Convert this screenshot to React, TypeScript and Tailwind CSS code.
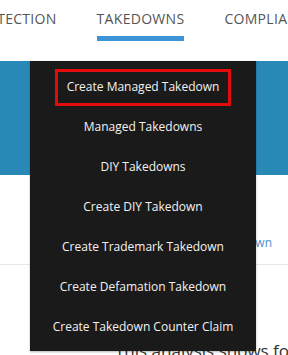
import React from "react";

const items = [
  "Create Managed Takedown",
  "Managed Takedowns",
  "DIY Takedowns",
  "Create DIY Takedown",
  "Create Trademark Takedown",
  "Create Defamation Takedown",
  "Create Takedown Counter Claim",
];

export default function App() {
  return (
    <div
      className="relative w-[288px] h-[355px] overflow-hidden bg-white"
      style={{ fontFamily: '"Open Sans", "Noto Sans", sans-serif' }}
    >
      {/* tabs */}
      <div className="h-[61px] grid grid-cols-[minmax(0,1fr)_auto_minmax(0,1fr)] gap-x-[40px] pr-[7px] pt-[8px] whitespace-nowrap text-[14px] text-[#555555] tracking-[0.3px]">
        <div className="justify-self-end leading-[22px]">PROTECTION</div>
        <div className="flex flex-col items-stretch">
          <span className="leading-[22px]">TAKEDOWNS</span>
          <span className="mt-[6px] h-[5px] bg-[#3c93d6]" />
        </div>
        <div className="justify-self-start leading-[22px]">COMPLIANCE</div>
      </div>
      {/* blue band */}
      <div className="h-[114px] bg-[#2889b7]" />
      {/* content */}
      <div className="h-[60px]" />
      <div className="flex justify-end pr-[16px] text-[12px] leading-[16px] text-[#4a90c8]">
        Managed Takedown
      </div>
      <div className="mt-[13px] h-[1px] bg-[#e6e6e6]" />
      <div className="mt-[74px] pl-[115px] whitespace-nowrap text-[17px] leading-[24px] text-[#333]">
        This analysis shows for
      </div>

      {/* dropdown menu */}
      <div className="absolute left-[30px] top-[61px] w-[226px] h-[290px] bg-[#1b1a1a] pt-[6px] shadow-[0_1px_2px_rgba(0,0,0,0.3)]">
        {items.map((t, i) => (
          <div key={t} className="h-[40px] flex items-center justify-center">
            {i === 0 ? (
              <div className="w-[176px] h-[37px] border-[3px] border-[#e30b0b] flex items-center justify-center text-[12px] text-[#f2f2f2] whitespace-nowrap">
                {t}
              </div>
            ) : (
              <span className="text-[12px] text-[#f2f2f2] whitespace-nowrap">{t}</span>
            )}
          </div>
        ))}
      </div>
    </div>
  );
}
